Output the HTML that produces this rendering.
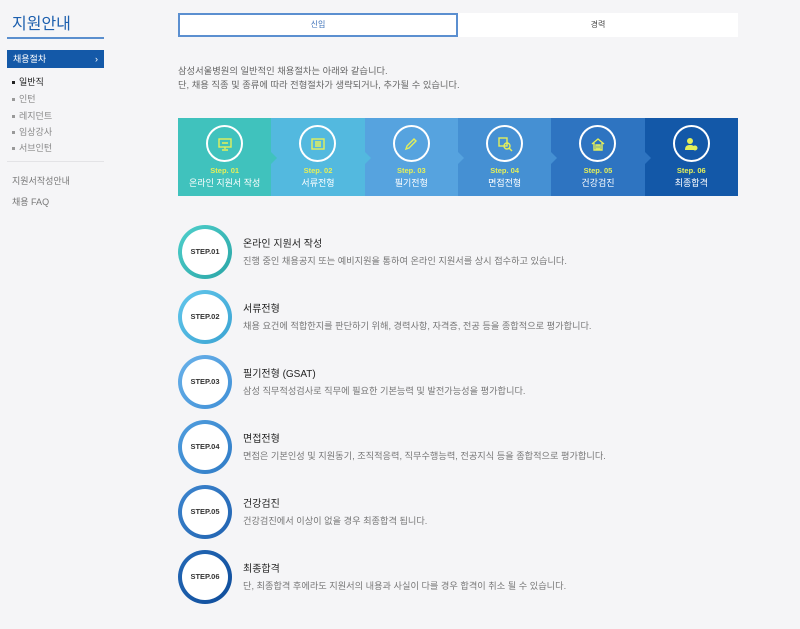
<!DOCTYPE html>
<html><head><meta charset="utf-8">
<style>
*{margin:0;padding:0;box-sizing:border-box}
body{width:800px;height:629px;background:#f5f5f7;font-family:"Liberation Sans","Noto Sans CJK KR",sans-serif;position:relative;overflow:hidden;color:#333}
.abs{position:absolute}
.side-title{left:12px;top:10px;font-size:16px;color:#1c5fae}
.side-line{left:7px;top:37px;width:97px;height:2px;background:#5b8fce}
.active{left:7px;top:50px;width:97px;height:18px;background:#1459a8;color:#fff;font-size:9px;line-height:18px;padding-left:6px}
.sub{left:12px;font-size:9px;color:#888}
.sub::before{content:"";display:inline-block;width:3px;height:3px;background:#999;margin-right:4px;vertical-align:middle}
.sub.on{color:#222}.sub.on::before{background:#222}
.divider{left:7px;top:161px;width:97px;height:1px;background:#e3e3e6}
.lnk{left:12px;font-size:9px;color:#777}
.tabs{left:178px;top:13px;width:560px;height:24px;background:#fff}
.tab1{left:178px;top:13px;width:280px;height:24px;border:2px solid #5b8fd0;font-size:8px;color:#3a6fb7;text-align:center;line-height:20px;background:#fff}
.tab2{left:458px;top:13px;width:280px;height:24px;font-size:8px;color:#444;text-align:center;line-height:24px}
.intro{left:178px;top:64px;font-size:9.3px;color:#666;line-height:14px}
.banner{left:178px;top:118px;width:560px;height:78px;display:flex}
.bx{flex:1;position:relative;text-align:center}
.bx .c{position:absolute;left:50%;top:7px;width:37px;height:37px;margin-left:-18.5px;border:2px solid #fff;border-radius:50%}
.bx .c svg{position:absolute;left:8.5px;top:8.5px}
.bx .s{position:absolute;left:0;right:0;top:48px;font-size:7.5px;color:#e4ef5a;font-weight:bold}
.bx .n{position:absolute;left:0;right:0;top:58px;font-size:9px;color:#fff}
.bx .ar{position:absolute;right:-6px;top:34px;width:0;height:0;border-top:6px solid transparent;border-bottom:6px solid transparent;z-index:2}
.step{left:178px;width:560px;height:60px}
.ring{position:absolute;left:0;top:0;width:54px;height:54px;border-radius:50%;padding:4px}
.ring div{width:100%;height:100%;border-radius:50%;background:#fff;font-size:7.5px;font-weight:bold;color:#333;text-align:center;line-height:46px}
.st{position:absolute;left:65px;top:10px;font-size:10px;color:#222}
.sd{position:absolute;left:65px;top:28px;font-size:9.2px;color:#777}
</style></head><body>
<div class="abs side-title">지원안내</div>
<div class="abs side-line"></div>
<div class="abs active">채용절차<span style="position:absolute;right:6px">›</span></div>
<div class="abs sub on" style="top:75px">일반직</div>
<div class="abs sub" style="top:92px">인턴</div>
<div class="abs sub" style="top:109px">레지던트</div>
<div class="abs sub" style="top:125px">임상강사</div>
<div class="abs sub" style="top:141px">서브인턴</div>
<div class="abs divider"></div>
<div class="abs lnk" style="top:174px">지원서작성안내</div>
<div class="abs lnk" style="top:195px">채용 FAQ</div>

<div class="abs tabs"></div>
<div class="abs tab1">신입</div>
<div class="abs tab2">경력</div>
<div class="abs intro">삼성서울병원의 일반적인 채용절차는 아래와 같습니다.<br>단, 채용 직종 및 종류에 따라 전형절차가 생략되거나, 추가될 수 있습니다.</div>

<div class="abs banner">
 <div class="bx" style="background:#40c2bd"><div class="c"><svg width="16" height="16" viewBox="0 0 16 16" fill="none" stroke="#e4ef5a" stroke-width="1.4"><rect x="2" y="3" width="12" height="8"/><path d="M5 7h6M8 11v2M5 14h6"/></svg></div><div class="s">Step. 01</div><div class="n">온라인 지원서 작성</div><div class="ar" style="border-left:6px solid #40c2bd"></div></div>
 <div class="bx" style="background:#53b9df"><div class="c"><svg width="16" height="16" viewBox="0 0 16 16" fill="none" stroke="#e4ef5a" stroke-width="1.4"><rect x="2" y="3" width="12" height="10"/><path d="M5 6h6M5 8h6M5 10h6"/></svg></div><div class="s">Step. 02</div><div class="n">서류전형</div><div class="ar" style="border-left:6px solid #53b9df"></div></div>
 <div class="bx" style="background:#56a3df"><div class="c"><svg width="16" height="16" viewBox="0 0 16 16" fill="none" stroke="#e4ef5a" stroke-width="1.4"><path d="M3 13l1-3 7-7 2 2-7 7z"/></svg></div><div class="s">Step. 03</div><div class="n">필기전형</div><div class="ar" style="border-left:6px solid #56a3df"></div></div>
 <div class="bx" style="background:#4590d3"><div class="c"><svg width="16" height="16" viewBox="0 0 16 16" fill="none" stroke="#e4ef5a" stroke-width="1.4"><rect x="2" y="2" width="8" height="8"/><circle cx="10" cy="10" r="3"/><path d="M12 12l3 3"/></svg></div><div class="s">Step. 04</div><div class="n">면접전형</div><div class="ar" style="border-left:6px solid #4590d3"></div></div>
 <div class="bx" style="background:#2e74c1"><div class="c"><svg width="16" height="16" viewBox="0 0 16 16" fill="none" stroke="#e4ef5a" stroke-width="1.4"><path d="M2 8l6-5 6 5M4 7v7h8V7M6 9h4v4H6zM8 9v4"/></svg></div><div class="s">Step. 05</div><div class="n">건강검진</div><div class="ar" style="border-left:6px solid #2e74c1"></div></div>
 <div class="bx" style="background:#1358a8"><div class="c"><svg width="16" height="16" viewBox="0 0 16 16" fill="#e4ef5a"><circle cx="7" cy="5" r="3"/><path d="M2 14c0-4 2-5 5-5s4 1 4 2v3z"/><circle cx="12" cy="12" r="2.5"/></svg></div><div class="s">Step. 06</div><div class="n">최종합격</div></div>
</div>

<div class="abs step" style="top:225px"><div class="ring" style="background:linear-gradient(135deg,#4fd0cc,#2aa5a6)"><div>STEP.01</div></div><div class="st">온라인 지원서 작성</div><div class="sd">진행 중인 채용공지 또는 예비지원을 통하여 온라인 지원서를 상시 접수하고 있습니다.</div></div>
<div class="abs step" style="top:290px"><div class="ring" style="background:linear-gradient(135deg,#63c7ec,#3aa3d2)"><div>STEP.02</div></div><div class="st">서류전형</div><div class="sd">채용 요건에 적합한지를 판단하기 위해, 경력사항, 자격증, 전공 등을 종합적으로 평가합니다.</div></div>
<div class="abs step" style="top:355px"><div class="ring" style="background:linear-gradient(135deg,#6ab2ea,#3f8fd6)"><div>STEP.03</div></div><div class="st">필기전형 (GSAT)</div><div class="sd">삼성 직무적성검사로 직무에 필요한 기본능력 및 발전가능성을 평가합니다.</div></div>
<div class="abs step" style="top:420px"><div class="ring" style="background:linear-gradient(135deg,#519fdf,#2f7bc6)"><div>STEP.04</div></div><div class="st">면접전형</div><div class="sd">면접은 기본인성 및 지원동기, 조직적응력, 직무수행능력, 전공지식 등을 종합적으로 평가합니다.</div></div>
<div class="abs step" style="top:485px"><div class="ring" style="background:linear-gradient(135deg,#3d86cf,#2062b0)"><div>STEP.05</div></div><div class="st">건강검진</div><div class="sd">건강검진에서 이상이 없을 경우 최종합격 됩니다.</div></div>
<div class="abs step" style="top:550px"><div class="ring" style="background:linear-gradient(135deg,#2569b6,#0e4c9a)"><div>STEP.06</div></div><div class="st">최종합격</div><div class="sd">단, 최종합격 후에라도 지원서의 내용과 사실이 다를 경우 합격이 취소 될 수 있습니다.</div></div>
</body></html>
